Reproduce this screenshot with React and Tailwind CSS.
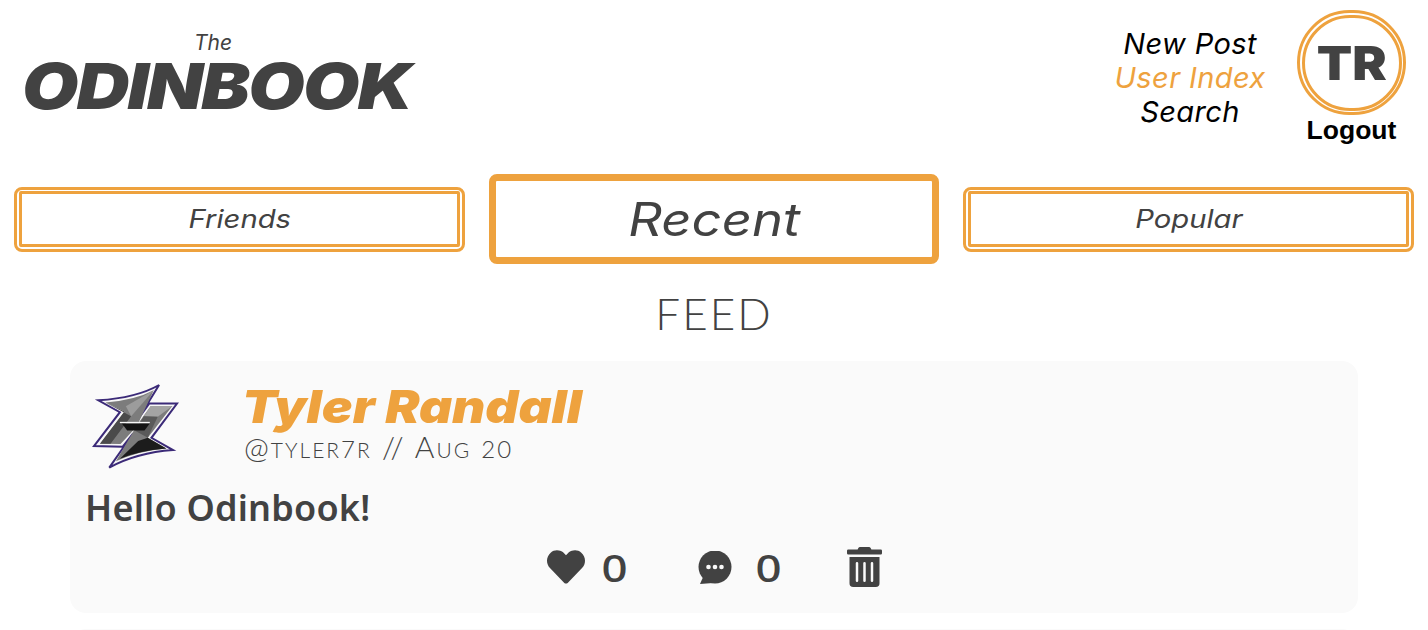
import React from "react";
import { FaHeart, FaTrashAlt } from "react-icons/fa";

function Logo() {
  return (
    <svg viewBox="66 70 262 262" className="w-[87px] h-[87px] shrink-0">
      <path d="M268 76 Q200 115 85 122 L150 158 L72 260 L158 262 L190 222 L118 325 Q200 280 310 272 L245 235 L322 132 L238 132 L205 178 Z" fill="#f7f7f7" stroke="#3b2a78" strokeWidth="6" strokeLinejoin="miter" />
      {/* body, inset from the outline */}
      <path d="M252 92 Q195 122 106 129 L164 156 L90 253 L152 254 L196 206 L138 306 Q205 274 290 267 L234 235 L308 139 L243 139 L205 192 Z" fill="#7c7c7c" />
      {/* left stem */}
      <path d="M106 129 L164 156 L90 253 L122 253 L184 170 Z" fill="#4a4a4a" />
      <path d="M252 92 L184 170 L168 140 Z" fill="#9c9c9c" />
      {/* right stem */}
      <path d="M308 139 L243 139 L222 170 L264 172 Z" fill="#a4a4a4" />
      <path d="M264 172 L222 170 L196 214 L234 235 Z" fill="#5a5a5a" />
      <path d="M234 235 L290 267 Q205 274 150 298 L205 245 Z" fill="#1c1c1c" />
      {/* crossbar */}
      <path d="M156 192 L240 192 L224 213 L172 213 Z" fill="#141414" />
      <path d="M150 189 L240 189" stroke="#f7f7f7" strokeWidth="4" />
    </svg>
  );
}

function CommentIcon() {
  return (
    <svg viewBox="0 0 34 33" className="w-[34px] h-[33px]" fill="currentColor">
      <circle cx="17" cy="16" r="16.5" />
      <path d="M6 24 L2 33 L15 32 Z" />
      <circle cx="10.5" cy="16" r="2.3" fill="#fafafa" />
      <circle cx="17" cy="16" r="2.3" fill="#fafafa" />
      <circle cx="23.5" cy="16" r="2.3" fill="#fafafa" />
    </svg>
  );
}

function Tab({ label, active }) {
  if (active) {
    return (
      <div className="h-[90px] rounded-lg border-[7px] border-[#eea23e] flex items-center justify-center font-['Inter',sans-serif] italic text-[46px] text-[#424242]">
        <span className="scale-x-[1.144]">{label}</span>
      </div>
    );
  }
  return (
    <div className="h-[65px] rounded-lg border-[3px] border-[#eea23e] p-[1.5px]">
      <div className="h-full rounded-[2px] border-[3px] border-[#eea23e] flex items-center justify-center pt-[2px] font-['Inter',sans-serif] italic text-[25px] text-[#424242]">
        <span className="scale-x-[1.17]">{label}</span>
      </div>
    </div>
  );
}

export default function App() {
  return (
    <div className="h-[630px] overflow-hidden bg-white text-[#424242]">
      <header className="h-[174px] flex justify-between">
        <div className="pl-[22px] pt-[32px] w-[420px] font-['Inter',sans-serif] italic">
          <div className="text-center text-[21px] leading-[22px] pr-[16px]">The</div>
          <div className="text-[63px] leading-[64px] font-black tracking-[-1.5px] whitespace-nowrap origin-left scale-x-[1.155] w-[340px]">ODINBOOK</div>
        </div>
        <div className="flex pr-[22px] pt-[10px]">
          <nav className="w-[160px] pt-[17px] mr-[27px] text-center font-['Inter',sans-serif] italic text-[29px] leading-[34px] tracking-[0.4px] text-black">
            <div>New Post</div>
            <div className="text-[#eea23e]">User Index</div>
            <div>Search</div>
          </nav>
          <div className="flex flex-col items-center w-[109px]">
            <div className="w-[109px] h-[105px] rounded-full border-[3px] border-[#eea23e] p-[1.5px]">
              <div className="w-full h-full rounded-full border-[3px] border-[#eea23e] flex items-center justify-center pt-[2px] font-['Inter',sans-serif] font-black text-[47px] text-[#424242]">
                <span className="scale-x-110">TR</span>
              </div>
            </div>
            <div className="font-['Liberation_Sans',sans-serif] font-bold text-[26.5px] leading-[30px] text-black whitespace-nowrap">Logout</div>
          </div>
        </div>
      </header>

      <div className="grid grid-cols-3 gap-[24px] px-[14px] items-center">
        <Tab label="Friends" />
        <Tab label="Recent" active />
        <Tab label="Popular" />
      </div>

      <h2 className="mt-[24px] text-center font-['Lato',sans-serif] font-light text-[44px] leading-[50px] tracking-[2px]">FEED</h2>

      <div className="mx-[70px] mt-[23px] flex flex-col gap-[16px]">
        <article className="h-[252px] rounded-2xl bg-[#fafafa] px-[16px] pt-[20px]">
          <div className="flex items-start">
            <div className="ml-[6px] mt-[2px]"><Logo /></div>
            <div className="ml-[65px]">
              <div className="font-['Inter',sans-serif] italic font-black text-[46px] leading-[50px] text-[#eea23e] whitespace-nowrap origin-left scale-x-[1.115] w-[310px] -ml-[2px]">Tyler Randall</div>
              <div className="font-['Lato',sans-serif] font-light text-[30px] leading-[30px] [font-variant:small-caps] tracking-[2px] text-[#424242] whitespace-nowrap">@tyler<span className="text-[24px]">7</span>r // Aug <span className="text-[24px]">20</span></div>
            </div>
          </div>
          <div className="mt-[16px] font-['Noto_Sans',sans-serif] font-semibold text-[36px] leading-[44px] tracking-[0.2px] -ml-[1px]">Hello Odinbook!</div>
          <div className="mt-[15px] flex justify-center items-center font-['Noto_Sans',sans-serif] font-medium text-[38px] leading-[44px]">
            <FaHeart className="w-[38px] h-[38px]" />
            <span className="w-[25px] ml-[17px] mr-[71px] text-center scale-x-[1.2]">0</span>
            <CommentIcon />
            <span className="w-[25px] ml-[24px] mr-[66px] text-center scale-x-[1.2]">0</span>
            <FaTrashAlt className="w-[35px] h-[40px]" />
          </div>
        </article>
        <article className="h-[200px] rounded-2xl bg-[#fafafa]" />
      </div>
    </div>
  );
}
